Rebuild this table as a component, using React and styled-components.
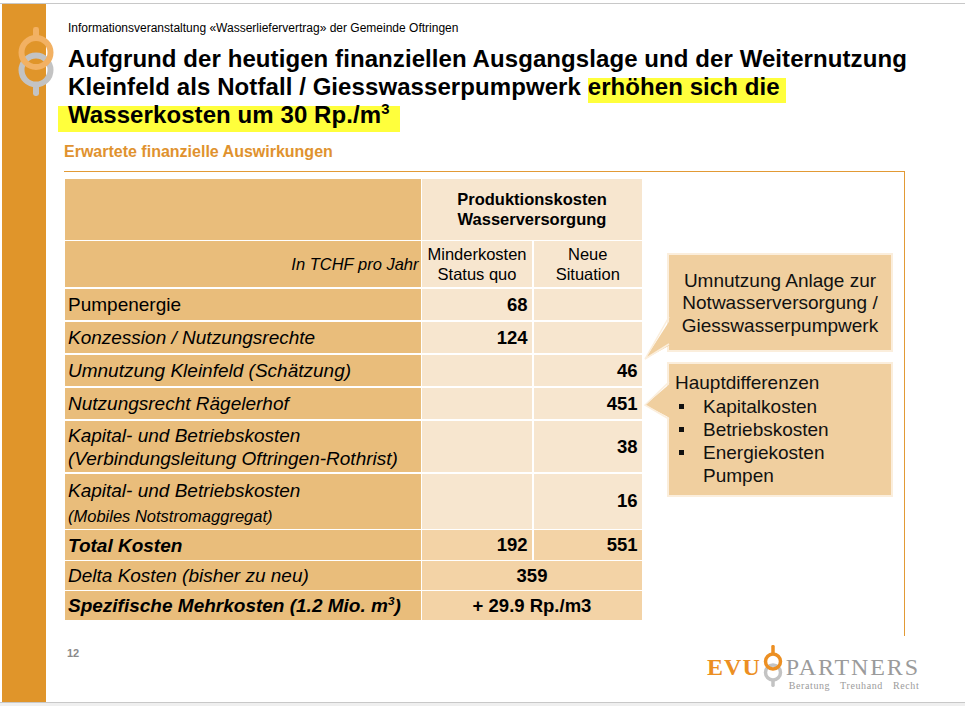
import React from 'react';
import styled, { createGlobalStyle, css } from 'styled-components';

const GlobalStyle = createGlobalStyle`
  html, body {
    margin: 0;
    padding: 0;
    background: #fff;
  }
  body {
    font-family: "Liberation Sans", Arial, sans-serif;
    color: #000;
  }
`;

const Screen = styled.div`
  width: 965px;
  height: 706px;
  overflow: hidden;
  padding-top: 3px;
  box-sizing: border-box;
  background: #fff;
`;

const Slide = styled.div`
  display: flex;
  height: 700px;
  box-sizing: border-box;
  border-top: 1px solid #c8c8c8;
  border-bottom: 1px solid #c8c8c8;
  padding-left: 2px;
`;

const Shelf = styled.div`
  height: 3px;
  background: #efefef;
`;

const SideBar = styled.div`
  flex: 0 0 44px;
  background: #e0952a;
`;

const SideLogo = styled.svg`
  display: block;
  overflow: visible;
`;

const Main = styled.div`
  flex: 1;
  display: flex;
  flex-direction: column;
  padding: 17px 0 0 18px;
  min-width: 0;
`;

const Subtitle = styled.div`
  margin-left: 4px;
  font-size: 12px;
  line-height: 14px;
`;

const Title = styled.h1`
  margin: 9.5px 0 0 4px;
  font-size: 24px;
  line-height: 28.3px;
  font-weight: bold;
  letter-spacing: 0.08px;
  white-space: nowrap;
`;

const Mark = styled.span`
  padding-bottom: 3.5px;
  background: linear-gradient(transparent 5px, #ffff3c 5px);
  padding-right: ${p => p.$pad}px;
  ${p => p.$lead && css`
    margin-left: -10px;
    padding-left: 10px;
  `}
`;

const Sup = styled.sup`
  font-size: 0.62em;
  line-height: 0;
  vertical-align: 0.62em;
`;

const Heading = styled.h2`
  margin: 13px 0 0;
  font-size: 16px;
  line-height: 20px;
  font-weight: bold;
  color: #e0922e;
`;

const Frame = styled.div`
  margin-top: 8.6px;
  width: 841px;
  box-sizing: border-box;
  border-top: 1px solid #e29a35;
  border-right: 1px solid #e29a35;
  padding: 7px 0 16px 1px;
  display: flex;
  align-items: flex-start;
`;

const Table = styled.div`
  display: grid;
  grid-template-columns: 355.5px 110px 108.5px;
  grid-template-rows: 61px 46px 31.5px 31.5px 31.5px 31.5px 51.5px 55px 29.5px 28.5px 28.5px;
  gap: 1.5px;
  background: #fff;
`;

const tones = {
  label: '#e9bd7b',
  light: '#f7e6cf',
  mid: '#f3d3a6',
};

const LabelCell = styled.div`
  display: flex;
  flex-direction: column;
  justify-content: center;
  align-items: ${p => (p.$right ? 'flex-end' : 'flex-start')};
  padding: ${p => p.$top || 0}px 2px 0 3px;
  background: ${tones.label};
  font-size: ${p => (p.$small ? 16.5 : 19)}px;
  line-height: 23px;
  font-style: ${p => (p.$upright ? 'normal' : 'italic')};
  font-weight: ${p => (p.$bold ? 'bold' : 'normal')};
  white-space: nowrap;
`;

const SubLine = styled.span`
  margin-top: 4px;
  font-size: 16.5px;
  line-height: 20px;
`;

const HeadCell = styled.div`
  display: flex;
  flex-direction: column;
  justify-content: center;
  align-items: center;
  text-align: center;
  grid-column: span ${p => p.$span || 1};
  background: ${tones.light};
  font-size: 16.5px;
  line-height: 20px;
  font-weight: ${p => (p.$bold ? 'bold' : 'normal')};
`;

const NumCell = styled.div`
  display: flex;
  align-items: center;
  justify-content: ${p => (p.$center ? 'center' : 'flex-end')};
  padding-right: ${p => (p.$center ? 0 : 4.5)}px;
  grid-column: span ${p => p.$span || 1};
  background: ${p => tones[p.$tone || 'light']};
  font-size: 18.5px;
  font-weight: bold;
`;

const Callouts = styled.div`
  display: flex;
  flex-direction: column;
  gap: 10px;
  width: 226px;
  margin: 74px 0 0 25px;
`;

const Callout = styled.div`
  position: relative;
  box-sizing: border-box;
  height: ${p => p.$h}px;
  background: #f0cf9f;
  border: 2px solid #fbeedc;
  font-size: 19px;
  color: #111;
  ${p => p.$centered
    ? css`
      display: flex;
      flex-direction: column;
      justify-content: center;
      text-align: center;
      line-height: 22.5px;
      padding-top: 2px;
    `
    : css`
      padding: 7.5px 6px 0;
      line-height: 23.2px;
    `}
`;

const Pointer = styled.svg`
  position: absolute;
  left: -26px;
  top: -2px;
  overflow: visible;
`;

const Bullets = styled.ul`
  margin: 0;
  padding: 0;
  list-style: none;
`;

const Bullet = styled.li`
  display: flex;
  &::before {
    content: "";
    flex: 0 0 5px;
    height: 5px;
    margin: 9px 19px 0 4px;
    background: #111;
  }
`;

const Footer = styled.div`
  display: flex;
  justify-content: space-between;
  align-items: flex-start;
  padding-right: 45px;
`;

const PageNo = styled.div`
  margin: 11.5px 0 0 3px;
  font-size: 11px;
  line-height: 13px;
  font-weight: bold;
  color: #8a8a8a;
`;

const Brand = styled.div`
  display: flex;
  align-items: flex-start;
  margin-top: 8px;
  font-family: "Liberation Serif", "Times New Roman", serif;
`;

const BrandEvu = styled.span`
  margin-top: 11px;
  font-size: 24px;
  line-height: 24px;
  font-weight: bold;
  letter-spacing: 1px;
  color: #ec8f22;
`;

const BrandRings = styled.svg`
  display: block;
  margin-left: 1px;
`;

const BrandWords = styled.div`
  display: flex;
  flex-direction: column;
  margin-left: 2px;
  color: #9b9b9b;
`;

const BrandName = styled.span`
  margin-top: 11px;
  font-size: 24px;
  line-height: 24px;
  letter-spacing: 1.9px;
`;

const BrandTag = styled.span`
  margin: 1px 0 0 3px;
  font-size: 10px;
  line-height: 12px;
  letter-spacing: 0.6px;
  word-spacing: 7px;
`;

// two linked rings with a pin above and below, as in the EVU logo
const Rings = ({ cx, oy, gy, r, w, top, bottom, orange }) => (
  <>
    <rect x={cx - w / 2} y={gy + r} width={w} height={bottom - gy - r} rx={w / 2.5} fill="#c3c3c3" />
    <circle cx={cx} cy={gy} r={r} fill="none" stroke="#c3c3c3" strokeWidth={w} />
    <rect x={cx - w / 2} y={top} width={w} height={oy - r - top} rx={w / 2.5} fill={orange} />
    <circle cx={cx} cy={oy} r={r} fill="none" stroke={orange} strokeWidth={w} />
  </>
);

const rows = [
  { label: 'Pumpenergie', upright: true, a: '68' },
  { label: 'Konzession / Nutzungsrechte', a: '124' },
  { label: 'Umnutzung Kleinfeld (Schätzung)', b: '46' },
  { label: 'Nutzungsrecht Rägelerhof', b: '451' },
];

export default function App() {
  return (
    <Screen>
      <GlobalStyle />
      <Slide>
        <SideBar>
          <SideLogo width="44" height="100" viewBox="0 0 44 100">
            <Rings cx={34} oy={48.5} gy={66} r={14.5} w={6} top={23} bottom={92} orange="#f2b163" />
          </SideLogo>
        </SideBar>
        <Main>
          <Subtitle>Informationsveranstaltung «Wasserliefervertrag» der Gemeinde Oftringen</Subtitle>
          <Title>
            Aufgrund der heutigen finanziellen Ausgangslage und der Weiternutzung
            <br />
            Kleinfeld als Notfall / Giesswasserpumpwerk <Mark $pad={6.7}>erhöhen sich die</Mark>
            <br />
            <Mark $lead $pad={10}>
              Wasserkosten um 30 Rp./m<Sup>3</Sup>
            </Mark>
          </Title>
          <Heading>Erwartete finanzielle Auswirkungen</Heading>
          <Frame>
            <Table>
              <LabelCell />
              <HeadCell $span={2} $bold>
                <span>Produktionskosten</span>
                <span>Wasserversorgung</span>
              </HeadCell>

              <LabelCell $right $small>In TCHF pro Jahr</LabelCell>
              <HeadCell>
                <span>Minderkosten</span>
                <span>Status quo</span>
              </HeadCell>
              <HeadCell>
                <span>Neue</span>
                <span>Situation</span>
              </HeadCell>

              {rows.map(row => (
                <React.Fragment key={row.label}>
                  <LabelCell $upright={row.upright}>{row.label}</LabelCell>
                  <NumCell>{row.a}</NumCell>
                  <NumCell>{row.b}</NumCell>
                </React.Fragment>
              ))}

              <LabelCell>
                <span>Kapital- und Betriebskosten</span>
                <span>(Verbindungsleitung Oftringen-Rothrist)</span>
              </LabelCell>
              <NumCell />
              <NumCell>38</NumCell>

              <LabelCell $top={3}>
                <span>Kapital- und Betriebskosten</span>
                <SubLine>(Mobiles Notstromaggregat)</SubLine>
              </LabelCell>
              <NumCell />
              <NumCell>16</NumCell>

              <LabelCell $bold>Total Kosten</LabelCell>
              <NumCell $tone="mid">192</NumCell>
              <NumCell $tone="mid">551</NumCell>

              <LabelCell>Delta Kosten (bisher zu neu)</LabelCell>
              <NumCell $tone="mid" $span={2} $center>359</NumCell>

              <LabelCell $bold>
                <span>
                  Spezifische Mehrkosten (1.2 Mio. m<Sup>3</Sup>)
                </span>
              </LabelCell>
              <NumCell $tone="mid" $span={2} $center>+ 29.9 Rp./m3</NumCell>
            </Table>

            <Callouts>
              <Callout $h={99} $centered>
                <Pointer width="30" height="110" viewBox="0 0 30 110">
                  <polygon points="29,64 2,106 29,91" fill="#f0cf9f" />
                  <polyline points="26,64 2,106 26,91" fill="none" stroke="#fbeedc" strokeWidth="1.5" />
                </Pointer>
                <span>Umnutzung Anlage zur</span>
                <span>Notwasserversorgung /</span>
                <span>Giesswasserpumpwerk</span>
              </Callout>
              <Callout $h={135}>
                <Pointer width="30" height="70" viewBox="0 0 30 70">
                  <polygon points="29,20 2,43 29,57" fill="#f0cf9f" />
                  <polyline points="26,20 2,43 26,57" fill="none" stroke="#fbeedc" strokeWidth="1.5" />
                </Pointer>
                <div>Hauptdifferenzen</div>
                <Bullets>
                  <Bullet>Kapitalkosten</Bullet>
                  <Bullet>Betriebskosten</Bullet>
                  <Bullet>
                    <span>
                      Energiekosten
                      <br />
                      Pumpen
                    </span>
                  </Bullet>
                </Bullets>
              </Callout>
            </Callouts>
          </Frame>

          <Footer>
            <PageNo>12</PageNo>
            <Brand>
              <BrandEvu>EVU</BrandEvu>
              <BrandRings width="22" height="44" viewBox="0 0 22 44">
                <Rings cx={11} oy={17.5} gy={28.5} r={7.5} w={3.5} top={1} bottom={43} orange="#ec8f22" />
              </BrandRings>
              <BrandWords>
                <BrandName>PARTNERS</BrandName>
                <BrandTag>Beratung Treuhand Recht</BrandTag>
              </BrandWords>
            </Brand>
          </Footer>
        </Main>
      </Slide>
      <Shelf />
    </Screen>
  );
}
